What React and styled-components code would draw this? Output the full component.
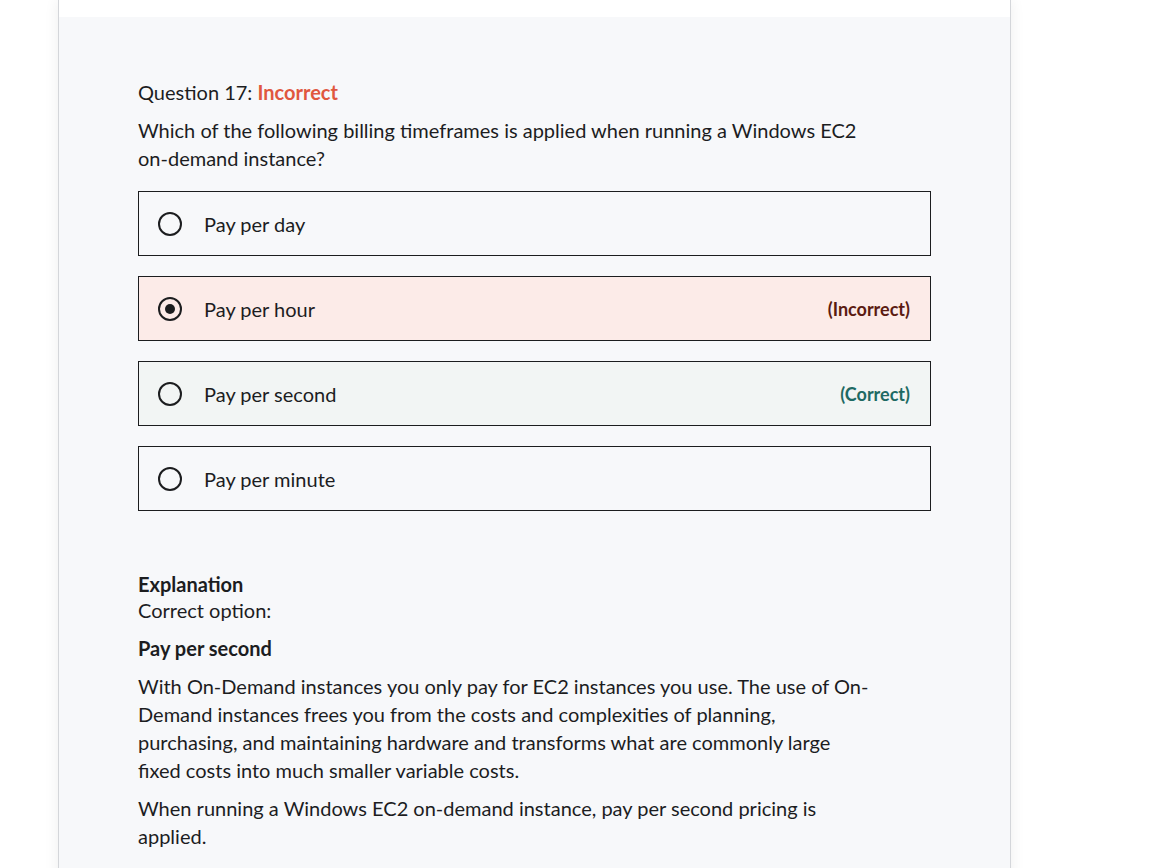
import React from "react";
import styled, { createGlobalStyle } from "styled-components";

const Global = createGlobalStyle`
  html, body { margin: 0; padding: 0; background: #ffffff; }
  body { font-family: Lato, "Open Sans", sans-serif; color: #1c1d1f; }
`;

const Page = styled.div`
  width: 1151px;
  height: 868px;
  overflow: hidden;
  background: #ffffff;
`;

const Panel = styled.main`
  margin-left: 58px;
  width: 953px;
  min-height: 868px;
  background: #f7f8fa;
  border-left: 1px solid #d4d6da;
  border-right: 1px solid #d4d6da;
  box-shadow: 0 0 14px rgba(0, 0, 0, 0.07);
  box-sizing: border-box;
`;

const TopStrip = styled.div`
  height: 17px;
  background: #ffffff;
`;

const Content = styled.div`
  padding: 61px 0 0 79px;
  font-size: 20px;
  line-height: 28px;
`;

const QuestionTitle = styled.div`
  margin-bottom: 10px;
`;

const Status = styled.span`
  font-weight: 700;
  color: #e0573f;
`;

const Prompt = styled.p`
  margin: 0 0 19px;
  max-width: 800px;
`;

const Options = styled.div`
  display: flex;
  flex-direction: column;
  gap: 20px;
  width: 793px;
`;

const Option = styled.div`
  display: flex;
  align-items: center;
  height: 65px;
  box-sizing: border-box;
  border: 1px solid #1c1d1f;
  padding: 0 20px 0 19px;
  background: ${(p) =>
    p.$state === "incorrect" ? "#fcebe8" : p.$state === "correct" ? "#f2f5f4" : "#f7f8fa"};
`;

const Radio = styled.span`
  width: 24px;
  height: 24px;
  box-sizing: border-box;
  border: 2px solid #1c1d1f;
  border-radius: 50%;
  display: flex;
  align-items: center;
  justify-content: center;
  flex-shrink: 0;
  &::after {
    content: "";
    width: 10px;
    height: 10px;
    border-radius: 50%;
    background: #1c1d1f;
    display: ${(p) => (p.$checked ? "block" : "none")};
  }
`;

const OptionLabel = styled.span`
  margin-left: 22px;
  flex: 1;
`;

const Verdict = styled.span`
  font-weight: 700;
  font-size: 18px;
  color: ${(p) => (p.$correct ? "#1e6a63" : "#5b1b12")};
`;

const Explanation = styled.section`
  margin-top: 60px;
  max-width: 800px;
`;

const Heading = styled.div`
  font-weight: 700;
  line-height: 26px;
`;

const Sub = styled.div`
  line-height: 26px;
  margin-bottom: 11px;
`;

const Answer = styled.div`
  font-weight: 700;
  margin-bottom: 10px;
`;

const Para = styled.p`
  margin: 0 0 10px;
`;

const options = [
  { label: "Pay per day" },
  { label: "Pay per hour", state: "incorrect", checked: true },
  { label: "Pay per second", state: "correct" },
  { label: "Pay per minute" },
];

export default function App() {
  return (
    <Page>
      <Global />
      <Panel>
        <TopStrip />
        <Content>
          <QuestionTitle>
            Question 17: <Status>Incorrect</Status>
          </QuestionTitle>
          <Prompt>
            Which of the following billing timeframes is applied when running a Windows EC2
            <br />
            on-demand instance?
          </Prompt>
          <Options>
            {options.map((o) => (
              <Option key={o.label} $state={o.state}>
                <Radio $checked={o.checked} />
                <OptionLabel>{o.label}</OptionLabel>
                {o.state === "incorrect" && <Verdict>(Incorrect)</Verdict>}
                {o.state === "correct" && <Verdict $correct>(Correct)</Verdict>}
              </Option>
            ))}
          </Options>
          <Explanation>
            <Heading>Explanation</Heading>
            <Sub>Correct option:</Sub>
            <Answer>Pay per second</Answer>
            <Para>
              With On-Demand instances you only pay for EC2 instances you use. The use of On-
              <br />
              Demand instances frees you from the costs and complexities of planning,
              <br />
              purchasing, and maintaining hardware and transforms what are commonly large
              <br />
              fixed costs into much smaller variable costs.
            </Para>
            <Para>
              When running a Windows EC2 on-demand instance, pay per second pricing is
              <br />
              applied.
            </Para>
            <Para>Learn more:</Para>
          </Explanation>
        </Content>
      </Panel>
    </Page>
  );
}
